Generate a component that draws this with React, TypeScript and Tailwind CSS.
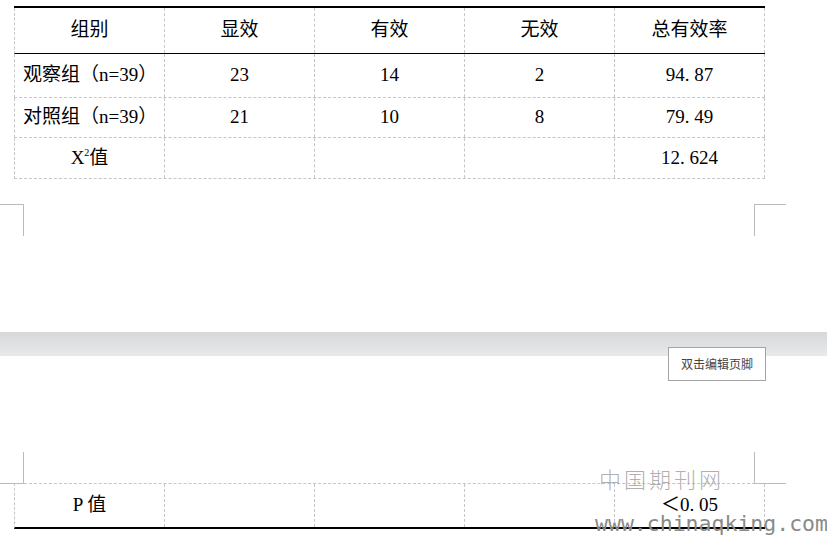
import React from 'react';

const serif = "font-['Liberation_Serif','Noto_Sans_CJK_SC',serif]";

const Num = ({ value }: { value: string }) => {
  const parts = value.split('.');
  if (parts.length === 1) return <>{value}</>;
  return (
    <>
      {parts[0]}
      <span className="inline-block w-[0.5em] text-left">.</span>
      {parts[1]}
    </>
  );
};

const Cell = ({
  children,
  left = false,
}: {
  children?: React.ReactNode;
  left?: boolean;
}) => (
  <div
    className={`flex h-full w-[150px] shrink-0 items-center border-r border-dashed border-[#c6c6c6] ${
      left ? 'justify-start pl-[8px]' : 'justify-center'
    }`}
  >
    {children}
  </div>
);

const rows = [
  { name: '观察组（n=39）', a: '23', b: '14', c: '2', rate: '94.87', h: 'h-[44px]' },
  { name: '对照组（n=39）', a: '21', b: '10', c: '8', rate: '79.49', h: 'h-[40px]' },
];

const App = () => {
  return (
    <div className={`relative h-[537px] w-[827px] overflow-hidden bg-white text-[19px] text-black ${serif}`}>
      {/* page 1 */}
      <div className="h-[332px] pt-[6px]">
        <div className="ml-[14px] w-[751px] border-t-2 border-black">
          <div className="flex h-[46px] border-b border-l border-b-black border-l-[#c6c6c6] border-dashed [border-bottom-style:solid]">
            {['组别', '显效', '有效', '无效', '总有效率'].map((t) => (
              <Cell key={t}>{t}</Cell>
            ))}
          </div>
          {rows.map((r) => (
            <div
              key={r.name}
              className={`flex ${r.h} border-b border-l border-dashed border-[#c6c6c6]`}
            >
              <Cell left>{r.name}</Cell>
              <Cell>{r.a}</Cell>
              <Cell>{r.b}</Cell>
              <Cell>{r.c}</Cell>
              <Cell>
                <Num value={r.rate} />
              </Cell>
            </div>
          ))}
          <div className="flex h-[41px] border-b border-l border-dashed border-[#c6c6c6]">
            <Cell>
              <span>
                X<span className="relative -top-[8px] text-[10px]">2</span>值
              </span>
            </Cell>
            <Cell />
            <Cell />
            <Cell />
            <Cell>
              <Num value="12.624" />
            </Cell>
          </div>
        </div>
        <div className="mt-[25px] flex w-[786px] justify-between">
          <div className="h-[32px] w-[24px] border-r border-t border-[#bcbcbc]" />
          <div className="h-[32px] w-[32px] border-l border-t border-[#bcbcbc]" />
        </div>
      </div>

      {/* page gap */}
      <div className="h-[24px] bg-gradient-to-b from-[#d7d8da] to-[#e8e9eb]" />

      {/* page 2 */}
      <div className="pt-[96px]">
        <div className="flex w-[786px] justify-between">
          <div className="h-[32px] w-[24px] border-b border-r border-[#bcbcbc]" />
          <div className="h-[32px] w-[32px] border-b border-l border-[#bcbcbc]" />
        </div>
        <div className="-mt-[1px] ml-[14px] flex h-[46px] w-[751px] border-b-2 border-l border-t border-dashed border-[#c6c6c6] border-b-black [border-bottom-style:solid]">
          <Cell>P 值</Cell>
          <Cell />
          <Cell />
          <Cell />
          <Cell>
            <span>
              ＜<Num value="0.05" />
            </span>
          </Cell>
        </div>
      </div>

      {/* footer label */}
      <div className="absolute left-[668px] top-[347px] flex h-[34px] w-[98px] items-center justify-center border border-[#a3a3a3] bg-white font-['Noto_Sans_CJK_SC',sans-serif] text-[12px] text-[#444]">
        双击编辑页脚
      </div>

      {/* watermark */}
      <div className="pointer-events-none absolute left-[599px] top-[467px] font-['Noto_Sans_CJK_SC',serif] text-[22px] font-light leading-none tracking-[3px] text-[#9a9a9a]/80">
        中国期刊网
      </div>
      <div className="pointer-events-none absolute left-[595px] top-[513px] font-['DejaVu_Sans_Mono',monospace] text-[21.5px] leading-none text-[#8a8a8a]">
        www.chinaqking.com
      </div>
    </div>
  );
};

export default App;
